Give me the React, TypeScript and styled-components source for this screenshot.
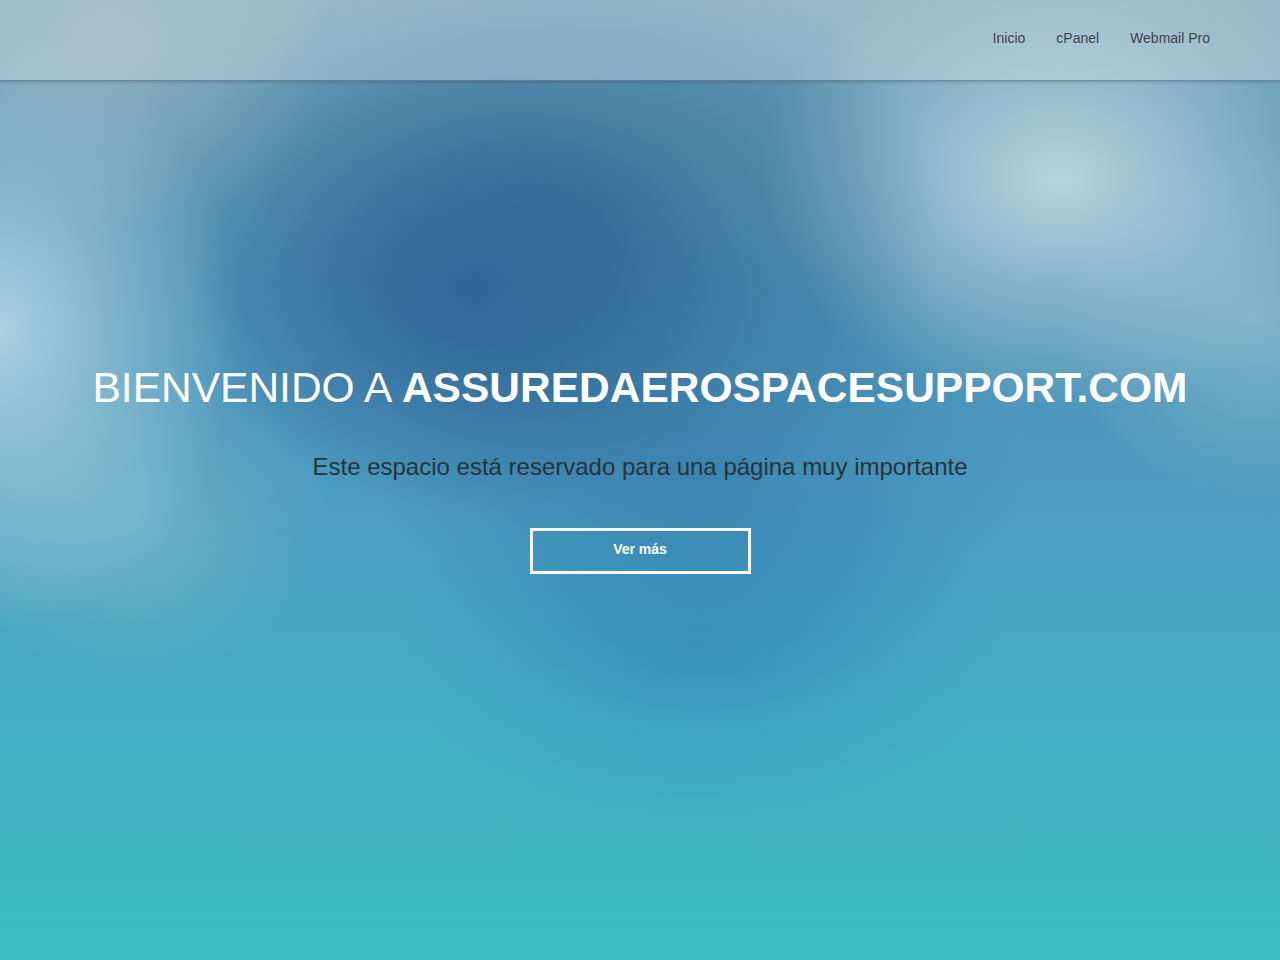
import styled, {createGlobalStyle} from "styled-components";

const GlobalStyle = createGlobalStyle`
  html, body {
    margin: 0;
    padding: 0;
  }
  body {
    font-family: "Liberation Sans", Arial, sans-serif;
  }
`

// blurry sky backdrop, built from a few soft colour blobs
const Page = styled.div`
  position: relative;
  width: 100%;
  min-height: 960px;
  display: flex;
  flex-direction: column;
  overflow: hidden;
  background:
    radial-gradient(ellipse 280px 220px at 470px 290px, rgba(46, 100, 150, 0.85), rgba(46, 100, 150, 0) 100%),
    radial-gradient(ellipse 380px 300px at 560px 230px, rgba(50, 105, 145, 0.8), rgba(50, 105, 145, 0) 100%),
    radial-gradient(ellipse 320px 260px at 700px 470px, rgba(50, 120, 170, 0.55), rgba(50, 120, 170, 0) 100%),
    radial-gradient(ellipse 300px 230px at 1060px 180px, rgba(200, 222, 228, 0.85), rgba(200, 222, 228, 0) 100%),
    radial-gradient(ellipse 200px 180px at 1260px 320px, rgba(165, 205, 218, 0.55), rgba(165, 205, 218, 0) 100%),
    radial-gradient(ellipse 240px 300px at 0px 330px, rgba(175, 212, 225, 0.95), rgba(175, 212, 225, 0) 100%),
    radial-gradient(ellipse 200px 160px at 130px 520px, rgba(140, 195, 210, 0.5), rgba(140, 195, 210, 0) 100%),
    radial-gradient(ellipse 220px 180px at 110px 50px, rgba(150, 178, 190, 0.8), rgba(150, 178, 190, 0) 100%),
    radial-gradient(ellipse 300px 200px at 700px 640px, rgba(50, 140, 185, 0.6), rgba(50, 140, 185, 0) 100%),
    linear-gradient(180deg, #6d9db4 0%, #4f90b6 30%, #4a9ec0 55%, #43afc4 75%, #3bbcc4 100%);
`

const Header = styled.header`
  position: relative;
  z-index: 1;
  height: 81px;
  display: flex;
  align-items: center;
  justify-content: flex-end;
  padding: 0 70px 5px 0;
  box-sizing: border-box;
  background: rgba(210, 224, 229, 0.42);
  border-bottom: 1px solid rgba(60, 90, 110, 0.55);
  box-shadow: 0 1px 3px rgba(20, 50, 70, 0.25);
`

const Nav = styled.nav`
  display: flex;
  gap: 31px;
`

const NavLink = styled.a`
  font-size: 14px;
  color: #3d4448;
  text-decoration: none;
`

const Hero = styled.main`
  display: flex;
  flex-direction: column;
  align-items: center;
  padding-top: 286px;
`

const Title = styled.h1`
  margin: 0;
  font-size: 42.5px;
  font-weight: 400;
  color: #fff;
  line-height: 1;

  strong {
    font-weight: 700;
  }
`

const Subtitle = styled.p`
  margin: 43px 0 0;
  font-size: 24px;
  color: #243440;
  line-height: 1.2;
`

const MoreButton = styled.a`
  margin-top: 47px;
  width: 221px;
  height: 46px;
  box-sizing: border-box;
  border: 3px solid #fff;
  display: flex;
  align-items: center;
  justify-content: center;
  padding-bottom: 5px;
  color: #fff;
  font-weight: 700;
  font-size: 14px;
  text-decoration: none;
`

export default function App() {
    return <Page>
        <GlobalStyle/>
        <Header>
            <Nav>
                <NavLink href="#">Inicio</NavLink>
                <NavLink href="#">cPanel</NavLink>
                <NavLink href="#">Webmail Pro</NavLink>
            </Nav>
        </Header>
        <Hero>
            <Title>BIENVENIDO A <strong>ASSUREDAEROSPACESUPPORT.COM</strong></Title>
            <Subtitle>Este espacio está reservado para una página muy importante</Subtitle>
            <MoreButton href="#">Ver más</MoreButton>
        </Hero>
    </Page>
}
